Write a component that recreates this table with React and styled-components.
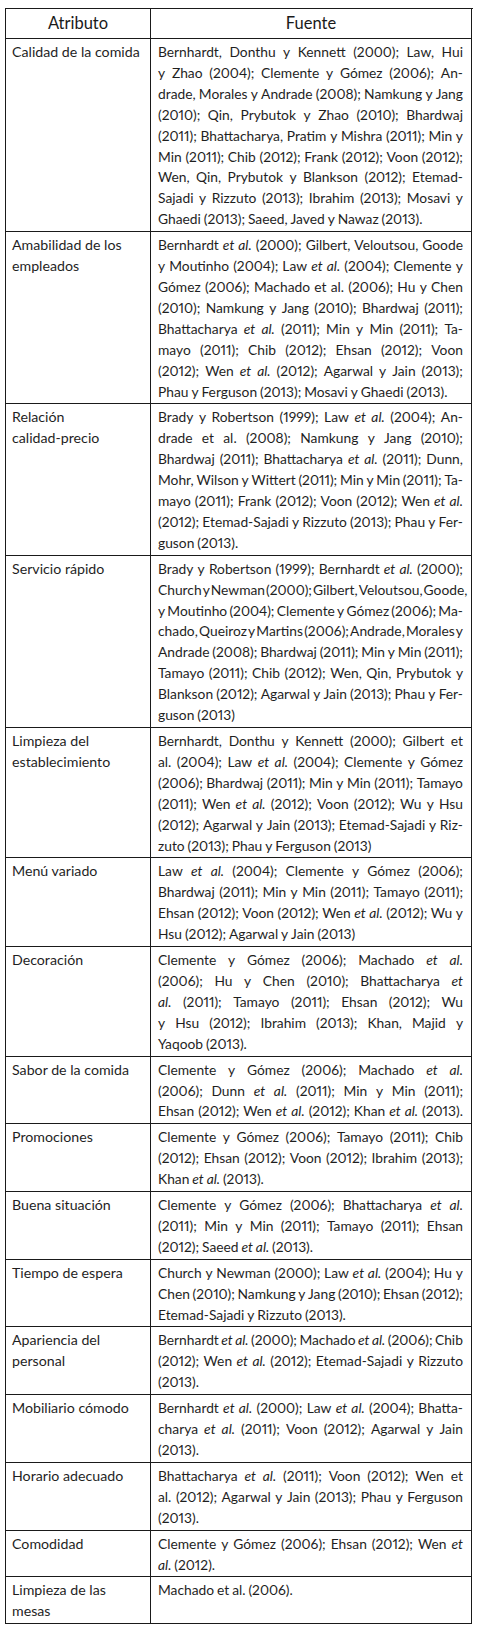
import React from 'react';
import styled, { createGlobalStyle } from 'styled-components';

const GlobalStyle = createGlobalStyle`
  html, body {
    margin: 0;
    padding: 0;
    background: #fff;
  }
  body {
    font-family: Lato, "Open Sans", "DejaVu Sans", sans-serif;
    color: #1f1f1f;
  }
`;

const Page = styled.div`
  padding: 8px 0 0 5px;
  width: 478px;
  box-sizing: border-box;
`;

const Grid = styled.div`
  display: grid;
  grid-template-columns: 145px 321px;
  width: 467px;
  border-left: 1px solid #1a1a1a;
  border-top: 1px solid #1a1a1a;
`;

const Cell = styled.div`
  box-sizing: border-box;
  border-right: 1px solid #1a1a1a;
  border-bottom: 1px solid #1a1a1a;
  font-size: ${(p) => (p.$source ? '13.8px' : '14.2px')};
  font-variant-numeric: proportional-nums;
  line-height: 20.9px;
  padding: ${(p) => (p.$source ? '3px 8px 1px 7px' : '3px 3px 1px 6px')};
`;

const HeadCell = styled(Cell)`
  height: 30px;
  padding: 0;
  display: flex;
  align-items: center;
  justify-content: center;
  font-size: 16.5px;
  color: #1a1a1a;
`;

const AttrLine = styled.span`
  display: block;
  white-space: nowrap;
`;

const Line = styled.div`
  display: flex;
  flex-wrap: nowrap;
  white-space: nowrap;
  justify-content: ${(p) => (p.$justify ? 'space-between' : 'flex-start')};
  gap: ${(p) => (p.$tight ? '1px' : p.$justify ? '1px' : '2.9px')};
`;

const Word = styled.span`
  font-style: ${(p) => (p.$italic ? 'italic' : 'normal')};
`;

const rows = [
  {
    attr: ['Calidad de la comida'],
    src: [
      'Bernhardt, Donthu y Kennett (2000); Law, Hui',
      'y Zhao (2004); Clemente y Gómez (2006); An-',
      'drade, Morales y Andrade (2008); Namkung y Jang',
      '(2010); Qin, Prybutok y Zhao (2010); Bhardwaj',
      '(2011); Bhattacharya, Pratim y Mishra (2011); Min y',
      'Min (2011); Chib (2012); Frank (2012); Voon (2012);',
      'Wen, Qin, Prybutok y Blankson (2012); Etemad-',
      'Sajadi y Rizzuto (2013); Ibrahim (2013); Mosavi y',
      'Ghaedi (2013); Saeed, Javed y Nawaz (2013).',
    ],
  },
  {
    attr: ['Amabilidad de los', 'empleados'],
    src: [
      'Bernhardt _et _al. (2000); Gilbert, Veloutsou, Goode',
      'y Moutinho (2004); Law _et _al. (2004); Clemente y',
      'Gómez (2006); Machado et al. (2006); Hu y Chen',
      '(2010); Namkung y Jang (2010); Bhardwaj (2011);',
      'Bhattacharya _et _al. (2011); Min y Min (2011); Ta-',
      'mayo (2011); Chib (2012); Ehsan (2012); Voon',
      '(2012); Wen _et _al. (2012); Agarwal y Jain (2013);',
      'Phau y Ferguson (2013); Mosavi y Ghaedi (2013).',
    ],
  },
  {
    attr: ['Relación', 'calidad-precio'],
    src: [
      'Brady y Robertson (1999); Law _et _al. (2004); An-',
      'drade et al. (2008); Namkung y Jang (2010);',
      'Bhardwaj (2011); Bhattacharya _et _al. (2011); Dunn,',
      'Mohr, Wilson y Wittert (2011); Min y Min (2011); Ta-',
      'mayo (2011); Frank (2012); Voon (2012); Wen _et _al.',
      '(2012); Etemad-Sajadi y Rizzuto (2013); Phau y Fer-',
      'guson (2013).',
    ],
  },
  {
    attr: ['Servicio rápido'],
    src: [
      'Brady y Robertson (1999); Bernhardt _et _al. (2000);',
      'Church y Newman (2000); Gilbert, Veloutsou, Goode,',
      'y Moutinho (2004); Clemente y Gómez (2006); Ma-',
      'chado, Queiroz y Martins (2006); Andrade, Morales y',
      'Andrade (2008); Bhardwaj (2011); Min y Min (2011);',
      'Tamayo (2011); Chib (2012); Wen, Qin, Prybutok y',
      'Blankson (2012); Agarwal y Jain (2013); Phau y Fer-',
      'guson (2013)',
    ],
  },
  {
    attr: ['Limpieza del', 'establecimiento'],
    src: [
      'Bernhardt, Donthu y Kennett (2000); Gilbert et',
      'al. (2004); Law _et _al. (2004); Clemente y Gómez',
      '(2006); Bhardwaj (2011); Min y Min (2011); Tamayo',
      '(2011); Wen _et _al. (2012); Voon (2012); Wu y Hsu',
      '(2012); Agarwal y Jain (2013); Etemad-Sajadi y Riz-',
      'zuto (2013); Phau y Ferguson (2013)',
    ],
  },
  {
    attr: ['Menú variado'],
    src: [
      'Law _et _al. (2004); Clemente y Gómez (2006);',
      'Bhardwaj (2011); Min y Min (2011); Tamayo (2011);',
      'Ehsan (2012); Voon (2012); Wen _et _al. (2012); Wu y',
      'Hsu (2012); Agarwal y Jain (2013)',
    ],
  },
  {
    attr: ['Decoración'],
    src: [
      'Clemente y Gómez (2006); Machado _et _al.',
      '(2006); Hu y Chen (2010); Bhattacharya _et',
      '_al. (2011); Tamayo (2011); Ehsan (2012); Wu',
      'y Hsu (2012); Ibrahim (2013); Khan, Majid y',
      'Yaqoob (2013).',
    ],
  },
  {
    attr: ['Sabor de la comida'],
    fullLast: true,
    src: [
      'Clemente y Gómez (2006); Machado _et _al.',
      '(2006); Dunn _et _al. (2011); Min y Min (2011);',
      'Ehsan (2012); Wen _et _al. (2012); Khan _et _al. (2013).',
    ],
  },
  {
    attr: ['Promociones'],
    src: [
      'Clemente y Gómez (2006); Tamayo (2011); Chib',
      '(2012); Ehsan (2012); Voon (2012); Ibrahim (2013);',
      'Khan _et _al. (2013).',
    ],
  },
  {
    attr: ['Buena situación'],
    src: [
      'Clemente y Gómez (2006); Bhattacharya _et _al.',
      '(2011); Min y Min (2011); Tamayo (2011); Ehsan',
      '(2012); Saeed _et _al. (2013).',
    ],
  },
  {
    attr: ['Tiempo de espera'],
    src: [
      'Church y Newman (2000); Law _et _al. (2004); Hu y',
      'Chen (2010); Namkung y Jang (2010); Ehsan (2012);',
      'Etemad-Sajadi y Rizzuto (2013).',
    ],
  },
  {
    attr: ['Apariencia del', 'personal'],
    src: [
      'Bernhardt _et _al. (2000); Machado _et _al. (2006); Chib',
      '(2012); Wen _et _al. (2012); Etemad-Sajadi y Rizzuto',
      '(2013).',
    ],
  },
  {
    attr: ['Mobiliario cómodo'],
    src: [
      'Bernhardt _et _al. (2000); Law _et _al. (2004); Bhatta-',
      'charya _et _al. (2011); Voon (2012); Agarwal y Jain',
      '(2013).',
    ],
  },
  {
    attr: ['Horario adecuado'],
    src: [
      'Bhattacharya _et _al. (2011); Voon (2012); Wen et',
      'al. (2012); Agarwal y Jain (2013); Phau y Ferguson',
      '(2013).',
    ],
  },
  {
    attr: ['Comodidad'],
    src: ['Clemente y Gómez (2006); Ehsan (2012); Wen _et', '_al. (2012).'],
  },
  {
    attr: ['Limpieza de las', 'mesas'],
    src: ['Machado et al. (2006).'],
  },
];

function SourceLine({ text, justify, tight }) {
  const words = text.split(' ');
  return (
    <Line $justify={justify} $tight={tight}>
      {words.map((w, i) =>
        w.startsWith('_') ? (
          <Word key={i} $italic>
            {w.slice(1)}
          </Word>
        ) : (
          <Word key={i}>{w}</Word>
        )
      )}
    </Line>
  );
}

export default function App() {
  return (
    <Page>
      <GlobalStyle />
      <Grid>
        <HeadCell>Atributo</HeadCell>
        <HeadCell>Fuente</HeadCell>
        {rows.map((row, r) => (
          <React.Fragment key={r}>
            <Cell>
              {row.attr.map((a, i) => (
                <AttrLine key={i}>{a}</AttrLine>
              ))}
            </Cell>
            <Cell $source>
              {row.src.map((t, i) => {
                const last = i === row.src.length - 1;
                return (
                  <SourceLine
                    key={i}
                    text={t}
                    justify={!last || row.fullLast}
                    tight={last && row.fullLast}
                  />
                );
              })}
            </Cell>
          </React.Fragment>
        ))}
      </Grid>
    </Page>
  );
}
